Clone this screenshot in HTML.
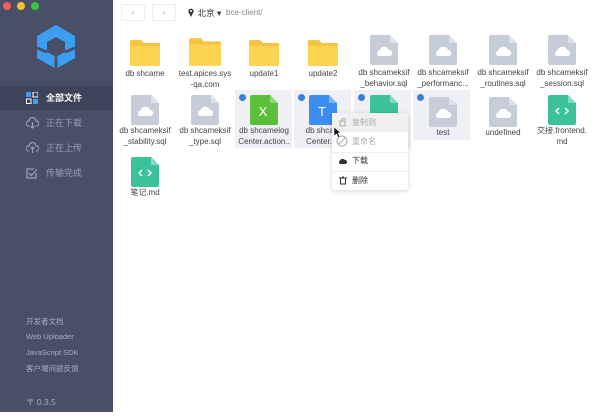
<!DOCTYPE html>
<html><head><meta charset="utf-8"><style>
*{margin:0;padding:0;box-sizing:border-box}
body{width:600px;height:417px;background:#fff;position:relative;overflow:hidden;font-family:"Liberation Sans","Noto Sans CJK SC",sans-serif}
.side{position:absolute;left:0;top:0;width:113px;height:412px;background:#4a4f68}
.dot{position:absolute;top:2px;width:8px;height:8px;border-radius:50%}
.nav{position:absolute;left:0;width:113px;height:24px;color:#9a9fb3;font-size:9px;line-height:24px}
.nav span{position:absolute;left:46px}
.nav svg{position:absolute;left:26px;top:6px}
.foot{position:absolute;left:26px;color:#a7abbd;font-size:7.5px}
.t{position:absolute;width:60px;text-align:center;font-size:8px;line-height:11px;color:#444;white-space:nowrap}
.ic{position:absolute}
.sel{position:absolute;background:#eef0f5}
.chk{position:absolute;width:7px;height:7px;border-radius:50%;background:#3a7fd6}
.mi{position:absolute;left:0;width:76px;height:19px;font-size:8px;line-height:19px}
.mi span{position:absolute;left:20px}
</style></head><body>
<div class="side">
<div class="dot" style="left:3px;background:#f25f58"></div>
<div class="dot" style="left:17px;background:#fbbe2f"></div>
<div class="dot" style="left:31px;background:#3ac53f"></div>
<svg style="position:absolute;left:34px;top:24px" width="44" height="46" viewBox="0 0 44 46">
<path fill="#3d9df0" fill-rule="evenodd" d="M22 1L41 12V34L22 45L3 34V12Z M22 13L31 18V28L22 33L13 28V18Z"/>
<path stroke="#4a4f68" stroke-width="3" d="M22 33V46 M13 28L3 24 M31 28L41 24"/>
</svg>
<div class="nav" style="top:86px;background:#3e4359;color:#fff;font-weight:bold"><svg width="12" height="12" viewBox="0 0 12 12"><rect x="0" y="0" width="5" height="5" fill="#3d9df0"/><rect x="7" y="0" width="5" height="5" fill="none" stroke="#fff"/><rect x="0.5" y="7" width="4.5" height="4.5" fill="none" stroke="#fff"/><rect x="7" y="7" width="5" height="5" fill="#3d9df0"/></svg><span>全部文件</span></div>
<div class="nav" style="top:111px"><svg width="13" height="12" viewBox="0 0 13 12"><path d="M3 9H2.5A2.5 2.5 0 0 1 3 4A3.5 3.5 0 0 1 10 4A2.5 2.5 0 0 1 10.5 9H10 M6.5 5V11 M4.5 9L6.5 11L8.5 9" fill="none" stroke="#9a9fb3" stroke-width="1.2"/></svg><span>正在下载</span></div>
<div class="nav" style="top:136px"><svg width="13" height="12" viewBox="0 0 13 12"><path d="M3 9H2.5A2.5 2.5 0 0 1 3 4A3.5 3.5 0 0 1 10 4A2.5 2.5 0 0 1 10.5 9H10 M6.5 5V11 M4.5 7L6.5 5L8.5 7" fill="none" stroke="#9a9fb3" stroke-width="1.2"/></svg><span>正在上传</span></div>
<div class="nav" style="top:161px"><svg width="12" height="12" viewBox="0 0 12 12"><path d="M10 6V11H1V2H8 M3 6L5.5 8.5L11 2" fill="none" stroke="#9a9fb3" stroke-width="1.3"/></svg><span>传输完成</span></div>
<div class="foot" style="top:316px">开发者文档</div>
<div class="foot" style="top:332px">Web Uploader</div>
<div class="foot" style="top:348px">JavaScript SDK</div>
<div class="foot" style="top:363px">客户端问题反馈</div>
<div class="foot" style="top:396px;font-size:8.5px">〒 0.3.5</div>
</div>

<div style="position:absolute;left:121px;top:4px;width:24px;height:17px;border:1px solid #eee;border-radius:2px;color:#bbb;font-size:9px;text-align:center;line-height:15px">‹</div>
<div style="position:absolute;left:152px;top:4px;width:24px;height:17px;border:1px solid #eee;border-radius:2px;color:#bbb;font-size:9px;text-align:center;line-height:15px">›</div>
<div style="position:absolute;left:187px;top:7px;font-size:8.5px;color:#333">📍北京 ▾</div>
<div style="position:absolute;left:187px;top:7px;width:10px;height:11px;background:#fff"></div>
<svg style="position:absolute;left:188px;top:8px" width="6" height="9" viewBox="0 0 6 9"><path d="M3 9L0.5 4A2.6 2.6 0 1 1 5.5 4Z" fill="#333"/><circle cx="3" cy="3" r="1" fill="#fff"/></svg>
<div style="position:absolute;left:226px;top:8px;font-size:8px;color:#888">bce-client/</div>

<!-- selected backgrounds -->
<div class="sel" style="left:235px;top:90px;width:57px;height:58px"></div>
<div class="sel" style="left:294px;top:90px;width:57px;height:58px"></div>
<div class="sel" style="left:354px;top:90px;width:57px;height:58px"></div>
<div class="sel" style="left:413px;top:90px;width:57px;height:50px"></div>
<div class="chk" style="left:239px;top:94px"></div>
<div class="chk" style="left:298px;top:94px"></div>
<div class="chk" style="left:358px;top:94px"></div>
<div class="chk" style="left:417px;top:94px"></div>

<svg width="0" height="0" style="position:absolute"><defs>
<g id="doc"><path d="M2 0H20L28 8V28a2 2 0 0 1-2 2H2a2 2 0 0 1-2-2V2a2 2 0 0 1 2-2Z" fill="#c6cdd9"/><path d="M20 0V8H28Z" fill="#dde2ea"/><path d="M8.5 21H19.5A3 3 0 0 0 19 15A5 5 0 0 0 9.5 15.5A3 3 0 0 0 8.5 21Z" fill="#fff"/></g>
<g id="fold"><path d="M1 0H11L14 3H29a1 1 0 0 1 1 1V25H0V1Z" fill="#f6c343"/><path d="M0 6H30V25a1 1 0 0 1-1 1H1a1 1 0 0 1-1-1Z" fill="#fdd452"/></g>
</defs></svg>

<!-- row 1 -->
<svg class="ic" style="left:130px;top:40px" width="30" height="26"><use href="#fold"/></svg>
<svg class="ic" style="left:189px;top:38px" width="32" height="28" viewBox="0 0 30 26"><use href="#fold"/></svg>
<svg class="ic" style="left:249px;top:40px" width="30" height="26"><use href="#fold"/></svg>
<svg class="ic" style="left:308px;top:40px" width="30" height="26"><use href="#fold"/></svg>
<svg class="ic" style="left:370px;top:35px" width="28" height="30"><use href="#doc"/></svg>
<svg class="ic" style="left:429px;top:35px" width="28" height="30"><use href="#doc"/></svg>
<svg class="ic" style="left:489px;top:35px" width="28" height="30"><use href="#doc"/></svg>
<svg class="ic" style="left:548px;top:35px" width="28" height="30"><use href="#doc"/></svg>
<div class="t" style="left:115px;top:68px">db shcame</div>
<div class="t" style="left:175px;top:68px">test.apices.sys<br>-qa.com</div>
<div class="t" style="left:234px;top:68px">update1</div>
<div class="t" style="left:293px;top:68px">update2</div>
<div class="t" style="left:354px;top:67px">db shcameksif<br>_behavior.sql</div>
<div class="t" style="left:413px;top:67px">db shcameksif<br>_performanc...</div>
<div class="t" style="left:473px;top:67px">db shcameksif<br>_routines.sql</div>
<div class="t" style="left:532px;top:67px">db shcameksif<br>_session.sql</div>

<!-- row 2 -->
<svg class="ic" style="left:131px;top:95px" width="28" height="30"><use href="#doc"/></svg>
<svg class="ic" style="left:191px;top:95px" width="28" height="30"><use href="#doc"/></svg>
<svg class="ic" style="left:250px;top:95px" width="28" height="30"><path d="M2 0H20L28 8V28a2 2 0 0 1-2 2H2a2 2 0 0 1-2-2V2a2 2 0 0 1 2-2Z" fill="#5bbf3c"/><path d="M20 0V8H28Z" fill="#8fd874"/><text x="13" y="21" font-size="13" fill="#fff" text-anchor="middle" font-family="Liberation Sans">X</text></svg>
<svg class="ic" style="left:309px;top:95px" width="28" height="30"><path d="M2 0H20L28 8V28a2 2 0 0 1-2 2H2a2 2 0 0 1-2-2V2a2 2 0 0 1 2-2Z" fill="#3d8cf0"/><path d="M20 0V8H28Z" fill="#7fb3f6"/><text x="13" y="21" font-size="13" fill="#fff" text-anchor="middle" font-family="Liberation Sans">T</text></svg>
<svg class="ic" style="left:370px;top:95px" width="28" height="30"><path d="M2 0H20L28 8V28a2 2 0 0 1-2 2H2a2 2 0 0 1-2-2V2a2 2 0 0 1 2-2Z" fill="#3cc29b"/><path d="M20 0V8H28Z" fill="#7fdcc0"/></svg>
<svg class="ic" style="left:429px;top:97px" width="28" height="30"><use href="#doc"/></svg>
<svg class="ic" style="left:489px;top:97px" width="28" height="30"><use href="#doc"/></svg>
<svg class="ic" style="left:548px;top:95px" width="28" height="30"><path d="M2 0H20L28 8V28a2 2 0 0 1-2 2H2a2 2 0 0 1-2-2V2a2 2 0 0 1 2-2Z" fill="#3cc29b"/><path d="M20 0V8H28Z" fill="#7fdcc0"/><path d="M11 13L8 16L11 19 M17 13L20 16L17 19" fill="none" stroke="#fff" stroke-width="1.5"/></svg>
<div class="t" style="left:115px;top:125px">db shcameksif<br>_stability.sql</div>
<div class="t" style="left:175px;top:125px">db shcameksif<br>_type.sql</div>
<div class="t" style="left:234px;top:125px">db shcamelog<br>Center.action..</div>
<div class="t" style="left:293px;top:125px">db shcam<br>Center.sc</div>
<div class="t" style="left:413px;top:127px">test</div>
<div class="t" style="left:473px;top:127px">undefined</div>
<div class="t" style="left:532px;top:125px">交接.frontend.<br>md</div>

<!-- row 3 -->
<svg class="ic" style="left:131px;top:157px" width="28" height="30"><path d="M2 0H20L28 8V28a2 2 0 0 1-2 2H2a2 2 0 0 1-2-2V2a2 2 0 0 1 2-2Z" fill="#3cc29b"/><path d="M20 0V8H28Z" fill="#7fdcc0"/><path d="M11 13L8 16L11 19 M17 13L20 16L17 19" fill="none" stroke="#fff" stroke-width="1.5"/></svg>
<div class="t" style="left:115px;top:187px">笔记.md</div>

<!-- context menu -->
<div style="position:absolute;left:332px;top:113px;width:76px;height:77px;background:#fff;border-radius:3px;box-shadow:0 1px 5px rgba(0,0,0,0.18)">
<div class="mi" style="top:0;background:#f0f0f0;color:#aaa"><span>复制到</span></div>
<div class="mi" style="top:19px;color:#aaa"><span>重命名</span></div>
<div style="position:absolute;left:0;top:39px;width:76px;height:1px;background:#eee"></div>
<div class="mi" style="top:38px;color:#333"><span>下载</span></div>
<div style="position:absolute;left:0;top:58px;width:76px;height:1px;background:#eee"></div>
<div class="mi" style="top:58px;color:#333"><span>删除</span></div>
<svg style="position:absolute;left:6px;top:5px" width="9" height="9"><path d="M2 3H7V8H2Z M4 3V1H8" fill="none" stroke="#aaa"/></svg>
<svg style="position:absolute;left:4px;top:22px" width="12" height="12"><circle cx="6" cy="6" r="5" fill="none" stroke="#aaa"/><path d="M3 9L9 3" stroke="#aaa"/></svg>
<svg style="position:absolute;left:6px;top:44px" width="9" height="8"><path d="M2 7H7A2 2 0 0 0 7 3A3 3 0 0 0 2 3.5A2 2 0 0 0 2 7Z" fill="#333"/></svg>
<svg style="position:absolute;left:7px;top:63px" width="8" height="9"><path d="M0 2H8 M3 1H5 M1.5 2V8H6.5V2" fill="none" stroke="#333"/></svg>
</div>
<!-- cursor -->
<svg style="position:absolute;left:334px;top:127px" width="8" height="11"><path d="M0 0V9L2.5 7L4.5 11L6 10L4 6H7Z" fill="#111" stroke="#fff" stroke-width="0.6"/></svg>
</body></html>
